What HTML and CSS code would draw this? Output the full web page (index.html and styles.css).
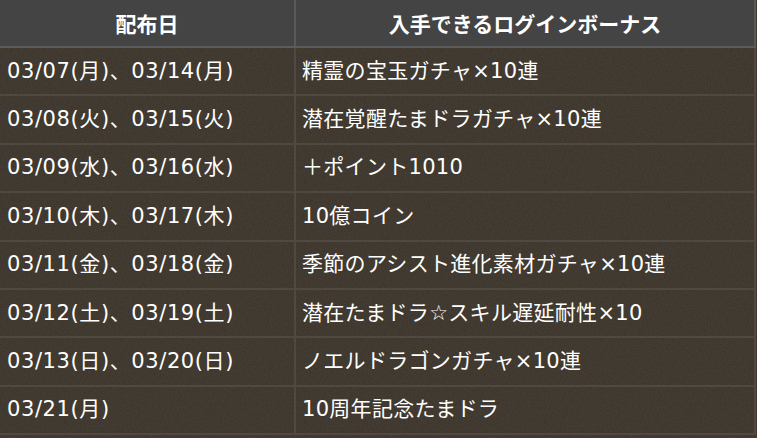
FILE: index.html
```html
<!DOCTYPE html>
<html lang="ja">
<head>
<meta charset="utf-8">
<title>ログインボーナス</title>
<link rel="stylesheet" href="styles.css">
</head>
<body>
<div class="table">
  <div class="cell head">配布日</div>
  <div class="cell head">入手できるログインボーナス</div>

  <div class="cell date">03/07(月)、03/14(月)</div>
  <div class="cell item">精霊の宝玉ガチャ×10連</div>

  <div class="cell date">03/08(火)、03/15(火)</div>
  <div class="cell item">潜在覚醒たまドラガチャ×10連</div>

  <div class="cell date">03/09(水)、03/16(水)</div>
  <div class="cell item">＋ポイント1010</div>

  <div class="cell date">03/10(木)、03/17(木)</div>
  <div class="cell item">10億コイン</div>

  <div class="cell date">03/11(金)、03/18(金)</div>
  <div class="cell item">季節のアシスト進化素材ガチャ×10連</div>

  <div class="cell date">03/12(土)、03/19(土)</div>
  <div class="cell item">潜在たまドラ☆スキル遅延耐性×10</div>

  <div class="cell date">03/13(日)、03/20(日)</div>
  <div class="cell item">ノエルドラゴンガチャ×10連</div>

  <div class="cell date">03/21(月)</div>
  <div class="cell item">10周年記念たまドラ</div>
</div>
</body>
</html>
```

FILE: styles.css
```css
html, body {
  margin: 0;
  padding: 0;
}

body {
  background-color: #39322a;
  background-image: url("data:image/svg+xml,%3Csvg xmlns='http://www.w3.org/2000/svg' width='240' height='240'%3E%3Cfilter id='n'%3E%3CfeTurbulence type='fractalNoise' baseFrequency='0.7' numOctaves='3' seed='4'/%3E%3CfeColorMatrix values='0 0 0 0 0.12  0 0 0 0 0.1  0 0 0 0 0.07  0 0 0 0.4 0'/%3E%3C/filter%3E%3Crect width='100%25' height='100%25' filter='url(%23n)'/%3E%3C/svg%3E");
  font-family: "DejaVu Sans", "Noto Sans CJK JP", sans-serif;
  color: #ffffff;
  height: 438px;
  overflow: hidden;
}

.table {
  display: grid;
  grid-template-columns: 296px 460px;
  grid-template-rows: 48px repeat(8, 48.4px);
  width: 756px;
}

.cell {
  box-sizing: border-box;
  display: flex;
  align-items: center;
  border-right: 2px solid #4f4942;
  border-bottom: 2px solid #4f4942;
  font-size: 21px;
  line-height: 1;
  white-space: nowrap;
}

.head {
  background: #444444;
  justify-content: center;
  font-family: "Noto Sans CJK JP", sans-serif;
  font-weight: bold;
  border-right-color: #595959;
  border-bottom-color: #5c5c5c;
}

.date {
  padding-left: 7px;
  letter-spacing: 0.6px;
}

.item {
  padding-left: 6px;
  letter-spacing: 0.3px;
}
```
